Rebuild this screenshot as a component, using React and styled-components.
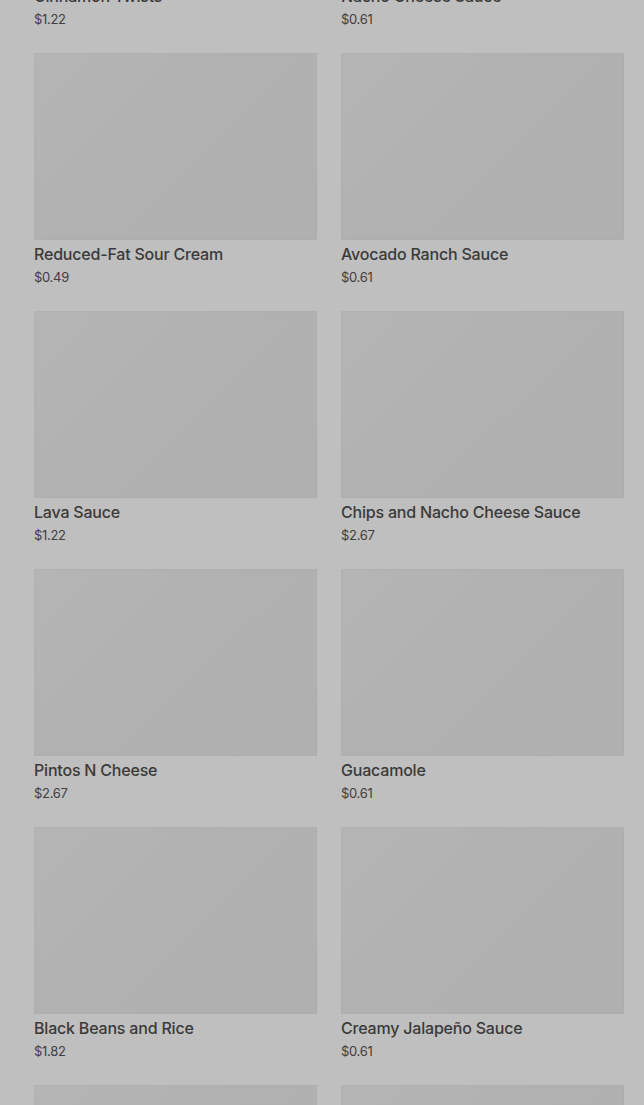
import React from "react";
import styled, { createGlobalStyle } from "styled-components";

const Global = createGlobalStyle`
  html, body { margin: 0; padding: 0; background: #bfbfbf; overflow: hidden; }
  body { font-family: Inter, "Noto Sans", Arial, sans-serif; -webkit-font-smoothing: antialiased; }
`;

const Page = styled.div`
  height: 1105px;
  overflow: hidden;
  background: #bfbfbf;
`;

const Grid = styled.div`
  display: grid;
  grid-template-columns: 1fr 1fr;
  column-gap: 24px;
  row-gap: 25px;
  padding: 0 20px 0 34px;
  margin-top: -205px;
`;

const Card = styled.div`
  display: flex;
  flex-direction: column;
`;

const Thumb = styled.div`
  height: 187px;
  border-radius: 1px;
  background: linear-gradient(135deg, #b5b5b5 0%, #b1b1b1 45%, #b0b0b0 100%);
  box-shadow: inset 0 0 3px rgba(0, 0, 0, 0.04);
`;

const Title = styled.div`
  margin-top: 4px;
  font-size: 16px;
  line-height: 20px;
  font-weight: 500;
  color: #3a3a3a;
  letter-spacing: -0.2px;
  white-space: nowrap;
`;

const Price = styled.div`
  margin-top: 4px;
  font-size: 13px;
  line-height: 18px;
  font-weight: 400;
  color: #404040;
  letter-spacing: -0.3px;
`;

const items = [
  ["Cinnamon Twists", "$1.22"],
  ["Nacho Cheese Sauce", "$0.61"],
  ["Reduced-Fat Sour Cream", "$0.49"],
  ["Avocado Ranch Sauce", "$0.61"],
  ["Lava Sauce", "$1.22"],
  ["Chips and Nacho Cheese Sauce", "$2.67"],
  ["Pintos N Cheese", "$2.67"],
  ["Guacamole", "$0.61"],
  ["Black Beans and Rice", "$1.82"],
  ["Creamy Jalapeño Sauce", "$0.61"],
  ["Seasoned Rice", "$1.22"],
  ["Cheesy Fiesta Potatoes", "$2.06"],
];

export default function App() {
  return (
    <Page>
      <Global />
      <Grid>
        {items.map(([name, price]) => (
          <Card key={name}>
            <Thumb />
            <Title>{name}</Title>
            <Price>{price}</Price>
          </Card>
        ))}
      </Grid>
    </Page>
  );
}
